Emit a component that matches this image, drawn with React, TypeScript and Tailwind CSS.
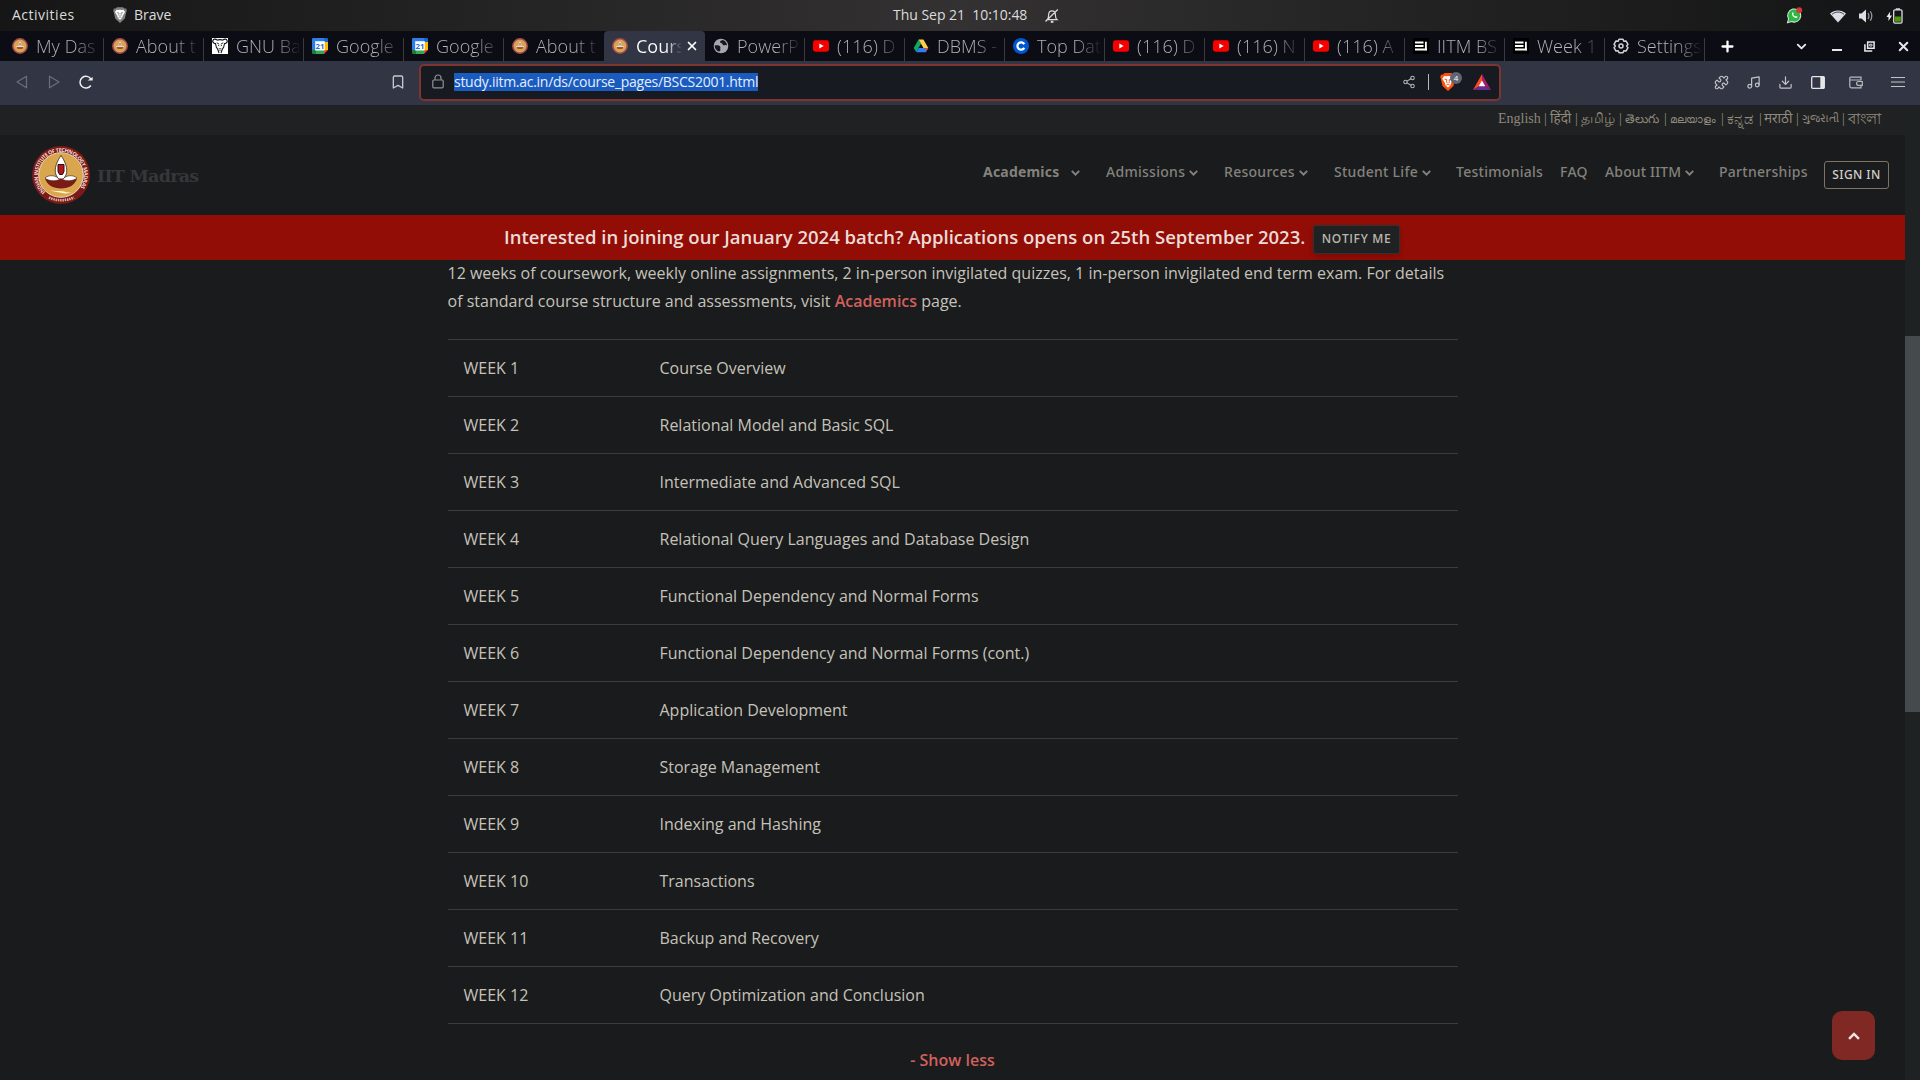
import React from "react";
import { Bookmark, Share2, Puzzle, Music, Download, X, Plus, ChevronDown } from "lucide-react";

function SealIcon() {
  return (
    <svg viewBox="0 0 16 16" className="size-4 shrink-0">
      <circle cx="8" cy="8" r="7.2" fill="#d9a451" stroke="#a04a50" strokeWidth="1.500" />
      <path d="M8 3.200 9.300 5.400V8.200H6.700V5.400z" fill="#f0e2d6" />
      <path d="M7.500 5h1v2.600h-1z" fill="#7d5552" />
      <path d="M4.200 8h7.600v1.300H4.200z" fill="#ead9c8" />
      <path d="M4.600 9.300h6.800l-1 1.500H5.600z" fill="#8f3325" />
    </svg>
  );
}

function GnuIcon() {
  return (
    <svg viewBox="0 0 16 16" className="size-4 shrink-0">
      <path d="M0 0h16v16H0z" fill="#fff" />
      <path d="M4 5.500C1.500 6 .3 4 1 2.300 1.600 1 3.500.8 5 2M12 5.500c2.500.5 3.700-1.500 3-3.200C14.400 1 12.500.8 11 2M5 2.300q3-1.300 6 0" fill="none" stroke="#16181c" strokeWidth="1.200" />
      <path d="M3.500 5.500 4.300 9l1.500 2.500L7 15M12.500 5.500 11.700 9l-1.500 2.500L9 15" fill="none" stroke="#16181c" strokeWidth="1.100" />
      <path d="m4.800 4.800 2.400 1.400M11.200 4.800 8.800 6.200M6 7.500l1.200.3M10 7.500l-1.200.3M6.700 10.500q1.300 1 2.600 0M7.500 12.500h1" fill="none" stroke="#16181c" strokeWidth=".9" />
    </svg>
  );
}

function CalendarIcon() {
  return (
    <svg viewBox="0 0 16 16" className="size-4 shrink-0">
      <path d="M0 1.200Q0 0 1.200 0H12v4H4v8H0z" fill="#2f7de9" />
      <path d="M12 0h2.800Q16 0 16 1.200V4h-4z" fill="#1967d2" />
      <path d="M12 4h4v8h-4z" fill="#fbbc04" />
      <path d="M4 12h8v4H4z" fill="#34a853" />
      <path d="M0 12h4v4H1.200Q0 16 0 14.800z" fill="#188038" />
      <path d="M12 12h4l-4 4z" fill="#ea4335" />
      <path d="M3.200 3.200h9.600v9.300H3.200z" fill="#fff" />
      <text x="8" y="10.800" textAnchor="middle" fontSize="7.800" fontWeight="700" fill="#2f6fd8" fontFamily="Open Sans, sans-serif">21</text>
    </svg>
  );
}

function GlobeIcon() {
  return (
    <svg viewBox="0 0 16 16" className="size-4 shrink-0">
      <circle cx="8" cy="8" r="7.300" fill="#a4a7ad" />
      <path d="M1.800 7.300C4 7 6.800 7.300 7.300 8.800c.4 1.100-.4 1.700.1 2.700.3.900-.5 1.700-1.300 2C3.500 13 1.500 10.500 1.800 7.300ZM9.300 2c-.8 1-2.300.6-2.300 2 .1 1.300 2 .8 2.400 1.900.4 1.200 1.400 1.700 2.700 1.100 1.100-.4 1.400.4 1.900.1C13.700 4.600 11.800 2.400 9.300 2Z" fill="#15161e" />
    </svg>
  );
}

function YoutubeIcon() {
  return (
    <svg viewBox="0 0 16 16" className="size-4 shrink-0">
      <rect y="2.300" width="16" height="11.400" rx="2.400" fill="#f90000" />
      <path d="m6.300 5.500 4.400 2.500-4.400 2.500z" fill="#fff" />
    </svg>
  );
}

function DriveIcon() {
  return (
    <svg viewBox="0 0 16 16" className="size-4 shrink-0">
      <path d="M5.600 1.500 8 5.700 3.200 14 .7 10z" fill="#11a861" />
      <path d="M5.600 1.500h4.800l4.900 8.500h-4.800z" fill="#ffcf48" />
      <path d="M5.600 10h9.700l-2.500 4.300H3.200z" fill="#2d7ff4" />
      <path d="M11.600 10h3.700L13.400 13z" fill="#e94235" />
    </svg>
  );
}

function CourseraIcon() {
  return (
    <svg viewBox="0 0 16 16" className="size-4 shrink-0">
      <circle cx="8" cy="8" r="8" fill="#0056d2" />
      <path d="M11.300 9.900A3.700 3.700 0 1 1 11.300 6.100" fill="none" stroke="#fff" strokeWidth="2.200" />
    </svg>
  );
}

function NotesIcon() {
  return (
    <svg viewBox="0 0 16 16" className="size-4 shrink-0">
      <path d="M0 0h16v16H0z" fill="#000" />
      <path d="M2 4.500h8.500M2 8h8.500M2 11.500h12" stroke="#fff" strokeWidth="1.800" />
      <path d="M12.900 3.700v8.500" stroke="#fff" strokeWidth="1.800" />
    </svg>
  );
}

function GearIcon() {
  return (
    <svg viewBox="0 0 16 16" className="size-4 shrink-0" fill="none" stroke="#d2d2d6" strokeWidth="1.500">
      <path d="M6 1.200h4l.8 2.100 2.200-.4 2 3.400L13.600 8l1.400 1.700-2 3.400-2.200-.4-.8 2.100H6l-.8-2.100-2.200.4-2-3.400L2.400 8 1 6.300l2-3.400 2.200.4z" strokeLinejoin="round" />
      <circle cx="8" cy="8" r="2" />
    </svg>
  );
}

function BraveLion({ shield, face, className }: { shield: string; face: string; className: string }) {
  return (
    <svg viewBox="0 0 16 18" className={className}>
      <path d="M4.500 0h7l1.500 1.500 2 .2L15.800 4l-.6 1.500-1.700 7.500L8 18l-5.500-5L.8 5.500.2 4 1 1.700l2-.2z" fill={shield} />
      <path d="m4.200 3 2 .3L8 2.900l1.800.4 2-.3 2 2.700-2.600 4.100-.8 2.700L8 14.500l-2.400-2-.8-2.700-2.600-4.100z" fill={face} />
      <path d="m4.500 6.200 2.400.6-.4 1.900.7 1.300M11.500 6.200l-2.400.6.4 1.900-.7 1.300M6.300 12l1.700-1 1.700 1" fill="none" stroke={shield} strokeWidth="1" />
    </svg>
  );
}

type Tab = { icon: () => React.ReactElement; title: string; active?: boolean };

const tabs: Tab[] = [
  { icon: SealIcon, title: "My Das" },
  { icon: SealIcon, title: "About t" },
  { icon: GnuIcon, title: "GNU Ba" },
  { icon: CalendarIcon, title: "Google" },
  { icon: CalendarIcon, title: "Google" },
  { icon: SealIcon, title: "About t" },
  { icon: SealIcon, title: "Cours", active: true },
  { icon: GlobeIcon, title: "PowerP" },
  { icon: YoutubeIcon, title: "(116) D" },
  { icon: DriveIcon, title: "DBMS -" },
  { icon: CourseraIcon, title: "Top Dat" },
  { icon: YoutubeIcon, title: "(116) D" },
  { icon: YoutubeIcon, title: "(116) N" },
  { icon: YoutubeIcon, title: "(116) A" },
  { icon: NotesIcon, title: "IITM BS" },
  { icon: NotesIcon, title: "Week 1" },
  { icon: GearIcon, title: "Settings" },
];

function TabItem({ tab, divider }: { tab: Tab; divider: boolean }) {
  const Icon = tab.icon;
  if (tab.active) {
    return (
      <div className="flex h-[30px] w-[101px] shrink-0 items-center rounded-t-[4px] bg-[#323543] pl-2">
        <Icon />
        <span className="ml-2 w-[46px] bg-linear-to-r from-white from-65% to-transparent bg-clip-text text-[18px] leading-[28px] whitespace-nowrap text-transparent">{tab.title}</span>
        <X className="ml-[3px] size-3.5 text-white" strokeWidth={3} />
      </div>
    );
  }
  return (
    <div className="-ml-px flex h-[30px] w-[101px] shrink-0 items-center pl-[9px] first:ml-0 first:w-[100px] first:pl-2">
      <Icon />
      <span className="ml-2 w-[65px] bg-linear-to-r from-[#b8b8bc] from-60% to-transparent bg-clip-text text-[18px] leading-[28px] font-[350] tracking-[0.05px] whitespace-nowrap text-transparent">{tab.title}</span>
      {divider && <span className="mt-auto ml-auto h-[23px] w-px bg-[#3b3a3a]" />}
    </div>
  );
}

function SystemBar() {
  return (
    <div className="flex h-[31px] items-center bg-linear-to-r from-[#161616] via-[#333131] to-[#131415] pb-0.5 text-[14px] text-[#dcdcdc]">
      <span className="ml-3 w-[101px] tracking-[0.5px]">Activities</span>
      <BraveLion shield="#808080" face="#ffffff" className="h-4 w-[14px]" />
      <span className="ml-[7px] w-[759px]">Brave</span>
      <span className="w-[136px] tracking-[-0.03px] whitespace-pre">Thu Sep 21  10:10:48</span>
      <svg viewBox="0 0 16 16" className="mt-0.5 ml-[15px] size-4" fill="none" stroke="#dcdcdc" strokeWidth="1.200">
        <path d="M3.300 11.600c1.300-1 1.200-3 1.300-5C4.800 4 6 2.800 8 2.800s3.300 1.200 3.400 3.800c.1 2 0 4 1.400 5zM13.800 1.500 1.500 13.500" />
        <path d="M6.800 13.800h2.600" strokeWidth="2" />
      </svg>
      <div className="mt-0.5 mr-[17px] ml-auto flex items-center">
        <svg viewBox="0 0 16 16" className="mr-[28px] size-[15px] overflow-visible">
          <path d="M.5 15.800 1.600 11.500A7 7 0 1 1 5 14.500z" fill="#2fb746" stroke="#d6e7da" strokeWidth="1.100" />
          <path d="M5.300 5.200c.8-1 1.300-.6 1.800.9-.8 1-.4 1.300.6 2.200 1 .8 1.400.8 2 .1 1.600.6 1.900.9 1.100 1.800-1.800 1.500-6-1.800-5.500-5Z" fill="#fff" />
          <circle cx="13" cy="2.500" r="3.200" fill="#cf3a34" />
        </svg>
        <svg viewBox="0 0 16 14" className="mr-3 h-[14px] w-4">
          <path d="M0 4.500C4.500.5 11.500.5 16 4.500L8 13.500z" fill="#dcdfe8" />
          <path d="M2 5.300c3.800-3 8.200-3 12 0" fill="none" stroke="#1a1a1a" strokeWidth=".8" />
        </svg>
        <svg viewBox="0 0 16 16" className="mr-3 size-4">
          <path d="M1 5.500h2.500L8 1.500v13L3.500 10.500H1z" fill="#dcdfe8" />
          <path d="M10 5q1.800 3 0 6M12.300 3.300q3 4.700 0 9.400" fill="none" stroke="#9a9ca2" strokeWidth="1.200" />
        </svg>
        <svg viewBox="0 0 17 16" className="h-4 w-[17px]">
          <path d="M4.200 3.500.5 9h2v4L6 7.500H3.800z" fill="#eee" />
          <rect x="7.700" y="1.800" width="8.300" height="13.300" rx="1.300" fill="none" stroke="#dcdfe8" strokeWidth="1.300" />
          <path d="M9.800.3H14v1.500H9.800z" fill="#dcdfe8" />
          <path d="M9 8.500h5.800v5.200H9z" fill="#4e9a06" />
        </svg>
      </div>
    </div>
  );
}

function TabStrip() {
  return (
    <div className="flex h-[30px] items-center bg-[#0c0c15] pl-1">
      <div className="flex">
        {tabs.map((t, i) => (
          <TabItem key={i} tab={t} divider={!tabs[i + 1]?.active} />
        ))}
      </div>
      <Plus className="ml-[14px] size-[17px] text-white" strokeWidth={3.2} />
      <div className="mr-[9px] ml-auto flex items-center text-[#e8e8ea]">
        <ChevronDown className="mr-[23px] size-[15px]" strokeWidth={3} />
        <span className="mt-2 mr-[22px] h-0.5 w-[10px] bg-[#e8e8ea]" />
        <svg viewBox="0 0 12 12" className="mr-[21px] size-[11px]" fill="none" stroke="#e8e8ea" strokeWidth="1.700">
          <path d="M4 1h7v7H4z" />
          <path d="M1 3.500V11h8" />
          <path d="M6.200 3.500h2.500v2H6.200z" strokeWidth="1" />
        </svg>
        <X className="size-[15px]" strokeWidth={3.2} />
      </div>
    </div>
  );
}

function Toolbar() {
  return (
    <div className="flex h-11 items-center bg-[#323543] pb-px">
      <svg viewBox="0 0 12 14" className="mb-px ml-4 h-[14px] w-3" fill="none" stroke="#6c6f7b" strokeWidth="1.200">
        <path d="M10.500 1.200v11.600L1 7z" strokeLinejoin="round" />
      </svg>
      <svg viewBox="0 0 12 14" className="mb-px ml-5 h-[14px] w-3" fill="none" stroke="#6c6f7b" strokeWidth="1.200">
        <path d="M1.500 1.200v11.600L11 7z" strokeLinejoin="round" />
      </svg>
      <svg viewBox="0 0 14 14" className="mb-0.5 ml-[19px] size-[14px] overflow-visible">
        <path d="M11.800 10.500A5.900 5.900 0 1 1 12 4.200" fill="none" stroke="#eee" strokeWidth="1.500" />
        <path d="M8.500 5.500h5.200V2z" fill="#eee" />
      </svg>
      <Bookmark className="mb-0.5 ml-[297px] size-4" color="#c6c7cc" strokeWidth={2} />
      <div className="ml-[13px] flex h-[37px] w-[1082px] items-center rounded-[5px] border-2 border-[#7d352f] bg-[#171a21] pb-0.5">
        <svg viewBox="0 0 12 15" className="ml-[11px] h-[15px] w-3" fill="none" stroke="#8f9198" strokeWidth="1.200">
          <rect x=".8" y="6" width="10.400" height="7.800" rx="1" />
          <path d="M3 6V4a3 3 0 0 1 6 0v2" />
        </svg>
        <span className="ml-[10px] flex h-[18px] w-[304px] items-center bg-[#1a5bbf] pb-px text-[14px] tracking-[-0.27px] whitespace-nowrap text-[#e6eefc]">study.iitm.ac.in/ds/course_pages/BSCS2001.html</span>
        <Share2 className="ml-auto size-[14px]" color="#b4b5b9" strokeWidth={1.8} />
        <span className="ml-[12px] h-4 w-px bg-[#b8b8bc]" />
        <div className="relative ml-[11px] h-[18px] w-4">
          <BraveLion shield="#fb5010" face="#ffffff" className="h-[18px] w-4" />
          <span className="absolute -top-px left-[10px] flex size-3 items-center justify-center rounded-full bg-[#5f6573] text-[8px] leading-none text-white">4</span>
        </div>
        <svg viewBox="0 0 18 16" className="mr-[8px] ml-[17px] h-4 w-[18px]">
          <path d="M9 0 0 16l9-5.500z" fill="#ff4724" />
          <path d="m9 0 9 16-9-5.500z" fill="#9e1f63" />
          <path d="M0 16h18l-9-5.500z" fill="#662d91" />
          <path d="m9 6.500 3.300 5.700H5.700z" fill="#fff" />
        </svg>
      </div>
      <div className="mr-[15px] mb-px ml-auto flex items-center text-[#c3c4c9]">
        <Puzzle className="mr-[17px] size-[15px]" strokeWidth={1.900} />
        <Music className="mr-[17px] size-[15px]" strokeWidth={1.900} />
        <Download className="mr-[18px] size-[15px]" strokeWidth={1.900} />
        <svg viewBox="0 0 14 13" className="mr-[24px] h-[13px] w-[14px]">
          <rect x=".7" y=".7" width="12.600" height="11.600" rx="1" fill="none" stroke="#e6e6e8" strokeWidth="1.300" />
          <path d="M9.300.7h4v11.600h-4z" fill="#e6e6e8" />
        </svg>
        <svg viewBox="0 0 14 13" className="mr-[28px] h-[13px] w-[14px]" fill="none" stroke="#b9bac0" strokeWidth="1.200">
          <path d="M12 4V1.200H1.800Q.8 1.200.8 2.600V10q0 1.800 1.500 1.800H12V10M1 4h11.500M13.300 5.500H9.500a1.700 1.700 0 0 0 0 3.800h3.800z" />
        </svg>
        <svg viewBox="0 0 14 12" className="h-3 w-[14px]">
          <path d="M0 1.500h14M0 6h14M0 10.500h14" stroke="#c3c4c9" strokeWidth="1.200" />
        </svg>
      </div>
    </div>
  );
}

function LanguageBar() {
  return (
    <div className="flex h-[30px] items-start justify-end bg-[#1f2122] pt-1 pr-[23px] font-['Liberation_Serif','Noto_Sans',serif] text-[14px] leading-5 whitespace-nowrap text-[#8f897c]">
      <span className="w-[46px]">English</span>
      <span className="w-[6px]">|</span>
      <span className="w-[25px] text-[13.5px]">हिंदी</span>
      <span className="w-[6px]">|</span>
      <span className="w-[38px]">தமிழ்</span>
      <span className="w-[6px]">|</span>
      <span className="w-[39px] text-[12.5px]">తెలుగు</span>
      <span className="w-[6px]">|</span>
      <span className="w-[51px] text-[11px]">മലയാളം</span>
      <span className="w-[6px]">|</span>
      <span className="w-[32px] text-[15px]">ಕನ್ನಡ</span>
      <span className="w-[5px]">|</span>
      <span className="w-[32px] text-[13.5px]">मराठी</span>
      <span className="w-[6px]">|</span>
      <span className="w-[40px] text-[10.5px]">ગુજરાતી</span>
      <span className="w-[6px]">|</span>
      <span className="w-[34px] text-[14.500px]">বাংলা</span>
    </div>
  );
}

function InstituteSeal() {
  return (
    <svg viewBox="0 0 58 58" className="size-[58px]">
      <defs>
        <path id="rim" d="M14.200 46.500A23 23 0 1 1 43.800 46.500" />
      </defs>
      <circle cx="29" cy="29" r="29" fill="#7b1a16" />
      <circle cx="29" cy="29" r="22.300" fill="#d9a64e" stroke="#f0dcc0" strokeWidth="1" />
      <text fontSize="5.400" fontWeight="700" fill="#f1dfd8" fontFamily="Open Sans, sans-serif">
        <textPath href="#rim" textLength="104" startOffset="1">INDIAN INSTITUTE OF TECHNOLOGY MADRAS</textPath>
      </text>
      <path d="M17 51.500q12 5.500 25 0" fill="none" stroke="#d9b0a6" strokeWidth="2.600" strokeDasharray="1.500 .8" />
      <path d="M29 9.500c3.500 5 7.500 13 5 19.500L31 34h-4l-3-5c-2.500-6.500 1.500-14.500 5-19.500Z" fill="#fff" stroke="#33261a" strokeWidth=".8" />
      <path d="M26 18.500h6v7l-1.500 3h-3l-1.500-3z" fill="#b3151b" stroke="#2a100c" strokeWidth="1" />
      <path d="M13 32.500h32C43 39 37 42.500 29 42.500S15 39 13 32.500Z" fill="#7b1a16" />
      <path d="M13 32c4-3.500 11-3 14.500 1.500-5 2-11 1.500-14.500-1.500ZM45 32c-4-3.500-11-3-14.500 1.500 5 2 11 1.500 14.500-1.500Z" fill="#fff" stroke="#33261a" strokeWidth=".6" />
      <path d="M18 43.500c4 2.500 10 .8 14 2 3 1 6 1.200 8 .5-3 1.600-7 1.800-11 .8-4-1-8-.8-11-3.300Z" fill="#fff4d8" />
    </svg>
  );
}

function Chevron({ up = false }: { up?: boolean }) {
  return (
    <svg viewBox="0 0 9 6" className={up ? "h-[8px] w-[12px] rotate-180" : "mt-0.5 h-[6px] w-[9px]"} fill="none" stroke="currentColor" strokeWidth={up ? 1.800 : 2}>
      <path d="m.8.9 3.700 3.700L8.200.9" />
    </svg>
  );
}

function SiteHeader() {
  return (
    <header className="flex h-20 items-start bg-[#191b1c]">
      <div className="mt-[11px] ml-8">
        <InstituteSeal />
      </div>
      <span className="mt-[27px] ml-[7px] font-['Roboto_Slab','DejaVu_Serif',serif] text-[17.5px] leading-7 font-bold tracking-[-0.75px] text-[#35383a]">IIT Madras</span>
      <nav className="mt-[27px] mr-[16px] ml-auto flex h-5 items-center font-['Noto_Sans',sans-serif] text-[14px] leading-5 font-medium tracking-[0.28px] whitespace-nowrap text-[#84827d]">
        <span className="w-[88px] font-bold tracking-[0.2px]">Academics</span>
        <span className="w-[35px]"><Chevron /></span>
        <span className="w-[83px]">Admissions</span>
        <span className="w-[35px]"><Chevron /></span>
        <span className="w-[75px]">Resources</span>
        <span className="w-[35px]"><Chevron /></span>
        <span className="w-[88px]">Student Life</span>
        <span className="w-[34px]"><Chevron /></span>
        <span className="w-[104px]">Testimonials</span>
        <span className="w-[45px]">FAQ</span>
        <span className="w-[80px] tracking-[0.15px]">About IITM</span>
        <span className="w-[34px]"><Chevron /></span>
        <span className="w-[89px]">Partnerships</span>
      </nav>
      <button className="mt-[26px] mr-4 flex h-7 w-[65px] items-center justify-center rounded-[3px] border border-[#7d7466] font-['Noto_Sans',sans-serif] text-[12px] font-medium tracking-[0.4px] text-[#d3cfc9]">SIGN IN</button>
    </header>
  );
}

function Banner() {
  return (
    <div className="flex h-[45px] items-center bg-[#910d06] pl-[504px]">
      <span className="mb-0.5 w-[809px] text-[18.5px] font-semibold whitespace-nowrap text-[#ecdcd8]">Interested in joining our January 2024 batch? Applications opens on 25th September 2023.</span>
      <button className="mt-[3px] flex h-[29px] w-[87px] items-center justify-center rounded-[3px] border border-[#2e3234] bg-[#1f2122] text-[12px] font-semibold tracking-[0.65px] text-[#b9b4ac] shadow-md">NOTIFY ME</button>
    </div>
  );
}

const weeks = [
  "Course Overview",
  "Relational Model and Basic SQL",
  "Intermediate and Advanced SQL",
  "Relational Query Languages and Database Design",
  "Functional Dependency and Normal Forms",
  "Functional Dependency and Normal Forms (cont.)",
  "Application Development",
  "Storage Management",
  "Indexing and Hashing",
  "Transactions",
  "Backup and Recovery",
  "Query Optimization and Conclusion",
];

function CourseContent() {
  return (
    <main className="-mt-px ml-[447.5px] w-[1010px] text-[16px] leading-7 text-[#c6c2ba]">
      <p className="whitespace-nowrap">
        12 weeks of coursework, weekly online assignments, 2 in-person invigilated quizzes, 1 in-person invigilated end term exam. For details
        <br />
        of standard course structure and assessments, visit <b className="font-semibold text-[#d2605c]">Academics</b> page.
      </p>
      <div className="mt-6 border-b border-[#3a3d3f]">
        {weeks.map((title, i) => (
          <div key={title} className="flex h-[57px] items-center border-t border-[#3a3d3f] pl-4">
            <span className="w-[196px]">WEEK {i + 1}</span>
            <span>{title}</span>
          </div>
        ))}
      </div>
      <div className="mt-[22px] text-center font-semibold text-[#d2605c]">- Show less</div>
    </main>
  );
}

export default function App() {
  return (
    <div className="flex h-[1080px] w-[1920px] flex-col overflow-hidden bg-[#191b1c] font-['Open_Sans',sans-serif]">
      <SystemBar />
      <TabStrip />
      <Toolbar />
      <div className="flex h-[975px]">
        <div className="relative flow-root w-[1905px]">
          <LanguageBar />
          <SiteHeader />
          <Banner />
          <CourseContent />
          <button className="absolute right-[30px] bottom-[20px] flex h-[49px] w-[43px] items-center justify-center rounded-[10px] bg-[#802823] text-[#eee6e2]">
            <Chevron up />
          </button>
        </div>
        <div className="w-[15px] bg-[#1f2223] pt-[231px]">
          <div className="h-[376px] bg-[#454a4d]" />
        </div>
      </div>
    </div>
  );
}
